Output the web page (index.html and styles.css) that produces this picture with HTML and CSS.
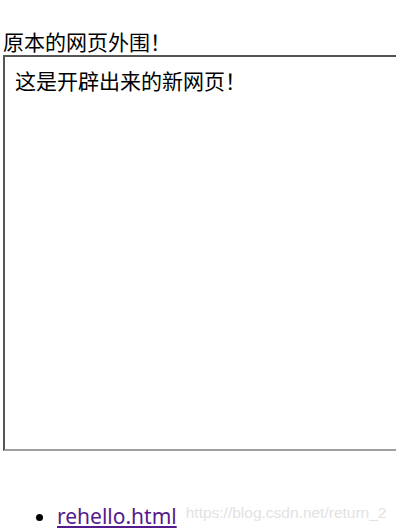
FILE: index.html
```html
<!DOCTYPE html>
<html>
<head>
<meta charset="utf-8">
<link rel="stylesheet" href="styles.css">
</head>
<body>
<div class="page">
  <div class="outer-title">原本的网页外围！</div>
  <div class="frame">
    <div class="frame-body">这是开辟出来的新网页！</div>
  </div>
  <ul class="links">
    <li><a class="link" href="#">rehello.html</a><span class="watermark">https://blog.csdn.net/return_2</span></li>
  </ul>
</div>
</body>
</html>
```
FILE: styles.css
```css
html, body {
  margin: 0;
  padding: 0;
  background: #fff;
  overflow: hidden;
}
.page {
  width: 396px;
  height: 532px;
  overflow: hidden;
  font-family: "Noto Sans CJK SC", sans-serif;
  font-size: 21px;
  color: #000;
}
.outer-title {
  padding-top: 27px;
  padding-left: 3px;
  line-height: 28px;
  white-space: nowrap;
}
.frame {
  margin-left: 3px;
  width: 440px;
  height: 392px;
  border-style: solid;
  border-width: 2px;
  border-color: #555 #a0a0a0 #a0a0a0 #555;
}
.frame-body {
  padding: 9px 0 0 10px;
  line-height: 29px;
  white-space: nowrap;
}
.links {
  margin: 48px 0 0 0;
  padding-left: 57px;
  list-style: disc;
  font-family: "Noto Sans", sans-serif;
  font-size: 21px;
  line-height: 28px;
  white-space: nowrap;
}
.link {
  color: #551a8b;
  text-decoration: underline;
}
.watermark {
  margin-left: 9px;
  font-family: "Liberation Sans", Arial, sans-serif;
  font-size: 15.5px;
  color: #e2e2e2;
  vertical-align: 6px;
}
```
